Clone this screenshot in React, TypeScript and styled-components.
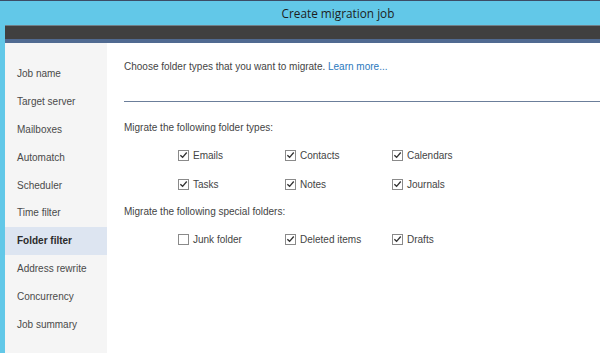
import styled, { createGlobalStyle } from 'styled-components'

const steps = [
  'Job name',
  'Target server',
  'Mailboxes',
  'Automatch',
  'Scheduler',
  'Time filter',
  'Folder filter',
  'Address rewrite',
  'Concurrency',
  'Job summary',
]

const folderTypes = [
  { label: 'Emails', checked: true },
  { label: 'Contacts', checked: true },
  { label: 'Calendars', checked: true },
  { label: 'Tasks', checked: true },
  { label: 'Notes', checked: true },
  { label: 'Journals', checked: true },
]

const specialFolders = [
  { label: 'Junk folder', checked: false },
  { label: 'Deleted items', checked: true },
  { label: 'Drafts', checked: true },
]

const GlobalStyle = createGlobalStyle`
  html, body {
    margin: 0;
    padding: 0;
    background: #ffffff;
  }
  body {
    font-family: 'Liberation Sans', Arial, sans-serif;
  }
`

const Check = ({ checked }: { checked: boolean }) => (
  <Box>
    {checked && (
      <svg width="10" height="10" viewBox="0 0 10 10">
        <path d="M1.5 5.2 L4 7.6 L8.6 2.2" fill="none" stroke="#333" strokeWidth="1.5" />
      </svg>
    )}
  </Box>
)

const CheckList = ({ items }: { items: { label: string; checked: boolean }[] }) => (
  <CheckGrid>
    {items.map((el) => (
      <CheckItem key={el.label}>
        <Check checked={el.checked} />
        <span>{el.label}</span>
      </CheckItem>
    ))}
  </CheckGrid>
)

export default function App() {
  return (
    <Page>
      <GlobalStyle />
      <TopStrip />
      <TitleBar>Create migration job</TitleBar>
      <Body>
        <LeftEdge />
        <Window>
          <HeaderBar />
          <Accent />
          <Main>
            <Sidebar>
              {steps.map((s) => (
                <Step key={s} active={s === 'Folder filter'}>
                  {s}
                </Step>
              ))}
            </Sidebar>
            <Content>
              <Intro>
                Choose folder types that you want to migrate. <Link>Learn more...</Link>
              </Intro>
              <Divider />
              <SectionTitle gap={19}>Migrate the following folder types:</SectionTitle>
              <CheckList items={folderTypes} />
              <SectionTitle gap={14}>Migrate the following special folders:</SectionTitle>
              <CheckList items={specialFolders} />
            </Content>
          </Main>
        </Window>
      </Body>
    </Page>
  )
}

const Page = styled.div`
  display: flex;
  flex-direction: column;
  width: 600px;
  height: 353px;
  overflow: hidden;
`
const TopStrip = styled.div`
  height: 1px;
  background-color: #3c4c66;
`
const TitleBar = styled.div`
  display: flex;
  align-items: center;
  justify-content: center;
  height: 24px;
  padding-left: 76px;
  background-color: #62c8e8;
  font-family: 'Open Sans', 'Noto Sans', sans-serif;
  font-size: 11.8px;
  color: #1e1e1e;
`
const Body = styled.div`
  display: flex;
  flex: 1;
  min-height: 0;
`
const LeftEdge = styled.div`
  width: 5px;
  background-color: #62c8e8;
`
const Window = styled.div`
  display: flex;
  flex-direction: column;
  flex: 1;
`
const HeaderBar = styled.div`
  height: 13px;
  background-color: #404040;
  border-top: 1px solid #6f7f88;
`
const Accent = styled.div`
  height: 4px;
  background-color: #506a91;
`
const Main = styled.div`
  display: flex;
  flex: 1;
`
const Sidebar = styled.div`
  display: flex;
  flex-direction: column;
  width: 102px;
  padding-top: 17px;
  background-color: #f5f5f5;
`
const Step = styled.div<{ active?: boolean }>`
  display: flex;
  align-items: center;
  height: 27.8px;
  padding-left: 12px;
  font-size: 10px;
  color: ${(p) => (p.active ? '#2b2b2b' : '#4a4a4a')};
  font-weight: ${(p) => (p.active ? 700 : 400)};
  background-color: ${(p) => (p.active ? '#dde5f1' : 'transparent')};
`
const Content = styled.div`
  display: flex;
  flex-direction: column;
  flex: 1;
  padding: 17px 0 0 17px;
  font-size: 10px;
  color: #444;
`
const Intro = styled.div`
  line-height: 14px;
`
const Link = styled.span`
  color: #2a78bd;
`
const Divider = styled.div`
  height: 1px;
  margin-top: 27px;
  background-color: #6b7e9a;
`
const SectionTitle = styled.div<{ gap: number }>`
  line-height: 14px;
  margin-top: ${(p) => p.gap}px;
`
const CheckGrid = styled.div`
  display: grid;
  grid-template-columns: repeat(3, 107px);
  grid-auto-rows: 14px;
  row-gap: 15px;
  padding-left: 54px;
  margin-top: 13px;
`
const CheckItem = styled.div`
  display: flex;
  align-items: center;
  gap: 4px;
  height: 14px;
`
const Box = styled.div`
  display: flex;
  align-items: center;
  justify-content: center;
  width: 11px;
  height: 11px;
  border: 1px solid #8a8a8a;
  background-color: #fff;
  box-sizing: border-box;
`
